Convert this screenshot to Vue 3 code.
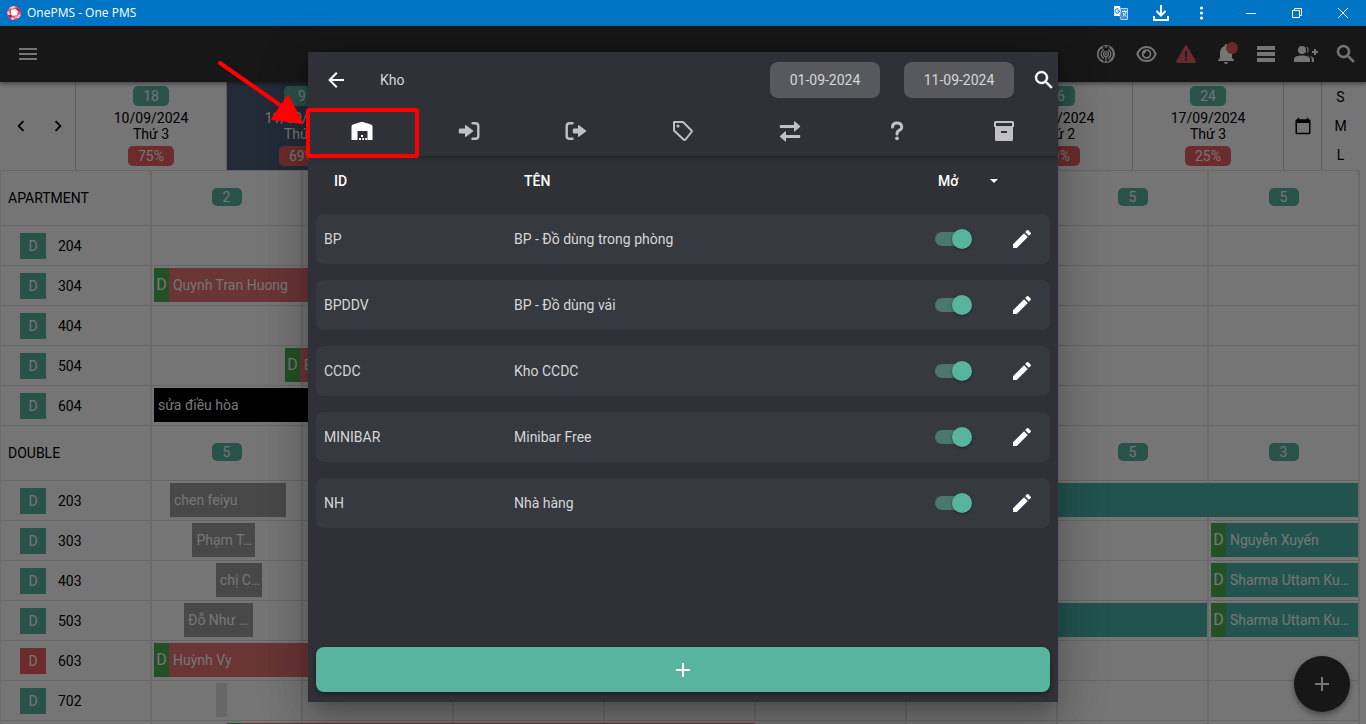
<script setup>
import { ref } from 'vue'

const days = [
  { date: '10/09/2024', name: 'Thứ 3', free: 18, load: '75%' },
  { date: '11/09/2024', name: 'Thứ 4', free: 9, load: '69%', today: true },
  { date: '12/09/2024', name: 'Thứ 5' },
  { date: '13/09/2024', name: 'Thứ 6' },
  { date: '14/09/2024', name: 'Thứ 7' },
  { date: '15/09/2024', name: 'CN' },
  { date: '16/09/2024', name: 'Thứ 2', free: 16, load: '39%' },
  { date: '17/09/2024', name: 'Thứ 3', free: 24, load: '25%' },
]

// start and end are counted in days from the first column
const groups = [
  {
    name: 'APARTMENT',
    free: [2, '', '', '', '', '', 5, 5],
    rooms: [
      { no: '204', bars: [] },
      { no: '304', bars: [{ start: 0.013, end: 2, kind: 'red', flag: true, text: 'Quynh Tran Huong' }] },
      { no: '404', bars: [] },
      { no: '504', bars: [{ start: 0.881, end: 2, kind: 'red', flag: true, text: 'E' }] },
      { no: '604', bars: [{ start: 0.013, end: 2, kind: 'black', text: 'sửa điều hòa' }] },
    ],
  },
  {
    name: 'DOUBLE',
    free: [5, '', '', '', '', '', 5, 3],
    rooms: [
      { no: '203', bars: [
        { start: 0.119, end: 0.887, kind: 'grey', text: 'chen feiyu' },
        { start: 5, end: 7.987, kind: 'teal', text: '' },
      ] },
      { no: '303', bars: [
        { start: 0.268, end: 0.684, kind: 'grey', text: 'Phạm T…' },
        { start: 7.013, end: 7.987, kind: 'teal', flag: true, text: 'Nguyễn Xuyến' },
      ] },
      { no: '403', bars: [
        { start: 0.423, end: 0.728, kind: 'grey', text: 'chị C…' },
        { start: 7.013, end: 7.987, kind: 'teal', flag: true, text: 'Sharma Uttam Ku…' },
      ] },
      { no: '503', bars: [
        { start: 0.212, end: 0.669, kind: 'grey', text: 'Đỗ Như …' },
        { start: 5, end: 6.987, kind: 'teal', text: '' },
        { start: 7.013, end: 7.987, kind: 'teal', flag: true, text: 'Sharma Uttam Ku…' },
      ] },
      { no: '603', dirty: true, bars: [{ start: 0.013, end: 2, kind: 'red', flag: true, text: 'Huỳnh Vy' }] },
      { no: '702', bars: [{ start: 0.424, end: 0.497, kind: 'pale', text: '' }] },
      { no: '703', bars: [{ start: 0.497, end: 3.987, kind: 'red', flag: true, text: '' }] },
    ],
  },
]

const place = (b) => ({
  left: (b.start / 8) * 100 + '%',
  width: ((b.end - b.start) / 8) * 100 + '%',
})

const tabs = ['Kho', 'Nhập', 'Xuất', 'Nhãn', 'Chuyển', 'Kiểm', 'Lưu trữ']
const activeTab = ref(0)

const stores = ref([
  { id: 'BP', name: 'BP - Đồ dùng trong phòng', open: true },
  { id: 'BPDDV', name: 'BP - Đồ dùng vải', open: true },
  { id: 'CCDC', name: 'Kho CCDC', open: true },
  { id: 'MINIBAR', name: 'Minibar Free', open: true },
  { id: 'NH', name: 'Nhà hàng', open: true },
])
const from = ref('01-09-2024')
const to = ref('11-09-2024')
const magnify = 'M9.5,3A6.5,6.5 0 0,1 16,9.5C16,11.11 15.41,12.59 14.44,13.73L14.71,14H15.5L20.5,19L19,20.5L14,15.5V14.71L13.73,14.44C12.59,15.41 11.11,16 9.5,16A6.5,6.5 0 0,1 3,9.5A6.5,6.5 0 0,1 9.5,3M9.5,5C7,5 5,7 5,9.5C5,12 7,14 9.5,14C12,14 14,12 14,9.5C14,7 12,5 9.5,5Z'
</script>

<template>
  <div class="window">
    <header class="titlebar">
      <svg class="logo" viewBox="0 0 14 14" width="14" height="14">
        <circle cx="7" cy="7" r="7" fill="#e5536b" />
        <path d="M2 2L6 0L9 1L5 3ZM0 6L2 5L3 9L1 9ZM11 9L14 8L12 12L10 12ZM4 11L8 12L6 14L4 13Z" fill="#f9c9d1" />
        <path d="M4 4L8 3L11 5L10 9L6 10L4 8Z" fill="#fff" />
        <path d="M9 2L12 3L13 6L11 5ZM1 9L4 9L5 12L2 11Z" fill="#c8102e" />
        <path d="M8 10L10 9L10 12L8 12Z" fill="#f3a0ae" />
      </svg>
      <span class="apptitle">OnePMS - One PMS</span>
      <button class="tb" aria-label="Dịch">
        <svg viewBox="0 0 16 16" width="16" height="16">
          <path d="M1.5 1H7L9 11H1.500Q1 11 1 10.500V1.500Q1 1 1.500 1Z" fill="#fff" />
          <path d="M6.500 5.800H4.300M6.500 5.800A2.200 2.200 0 1 1 5.700 4.200" stroke="#0075c5" fill="none" />
          <path d="M8 3.500H14.500V14.500H8L7 11.500" fill="#3b91d2" stroke="#b5d6ef" />
          <path d="M9 6.500H14M11.500 5.500V6.500M13 6.500Q12 10 9.500 11.500M10.200 8Q11 10 13.500 11.500" stroke="#e5f2fb" fill="none" />
        </svg>
      </button>
      <button class="tb" aria-label="Tải xuống">
        <svg viewBox="0 0 16 16" width="16" height="16" fill="none" stroke="#fff" stroke-width="2">
          <path d="M8 0V10M3.500 6L8 10.500L12.500 6M1 11V15H15V11" />
        </svg>
      </button>
      <button class="tb" aria-label="Tùy chọn">
        <svg viewBox="0 0 16 16" width="16" height="16" fill="#fff">
          <circle cx="8.500" cy="3" r="1.600" /><circle cx="8.500" cy="8" r="1.600" /><circle cx="8.500" cy="13" r="1.600" />
        </svg>
      </button>
      <button class="tb win first" aria-label="Thu nhỏ">
        <svg viewBox="0 0 10 10" width="10" height="10" stroke="#fff"><path d="M0 5.500H10" /></svg>
      </button>
      <button class="tb win" aria-label="Khôi phục">
        <svg viewBox="0 0 10 10" width="10" height="10" stroke="#fff" fill="none"><path d="M.5 2.500H7.500V9.500H.5ZM2.500 2.500V.5H9.500V7.500H7.500" /></svg>
      </button>
      <button class="tb win" aria-label="Đóng">
        <svg viewBox="0 0 10 10" width="10" height="10" stroke="#fff"><path d="M0 0L10 10M10 0L0 10" /></svg>
      </button>
    </header>

    <main class="app">
      <nav class="appbar">
        <button class="ab menu" aria-label="Menu">
          <svg viewBox="0 0 24 24" width="24" height="24"><path d="M3 6H21V8H3ZM3 11H21V13H3ZM3 16H21V18H3Z" /></svg>
        </button>
        <button class="ab" aria-label="Phát sóng">
          <svg class="line" viewBox="0 0 24 24" width="24" height="24">
            <circle cx="12" cy="12" r="8.500" stroke-width="1.200" />
            <path d="M9 19A7 7 0 0 1 9 5.500M15 5.500A7 7 0 0 1 15 18.500M10 16.500A5 5 0 0 1 10 7.500M14 7.500A5 5 0 0 1 14 16.500M12 15V21M12 3V6" stroke-width="1.300" />
            <circle cx="12" cy="12" r="2.500" stroke-width="1.200" /><circle cx="12" cy="12" r="1" />
          </svg>
        </button>
        <button class="ab" aria-label="Xem">
          <svg viewBox="0 0 24 24" width="24" height="24">
            <path d="M12.500 4C7.500 4 4 7 2.300 12C4 17 7.500 20 12.500 20S21 17 22.700 12C21 7 17.500 4 12.500 4ZM12.500 18C8.500 18 6 16 4.500 12C6 8 8.500 6 12.500 6S19 8 20.500 12C19 16 16.500 18 12.500 18Z" />
            <path d="M12.500 7.200A4.800 4.800 0 1 0 17.300 12A4.800 4.800 0 0 0 12.500 7.200ZM12.500 15A3 3 0 0 1 9.600 11.500A2 2 0 0 0 12 9.100A3 3 0 1 1 12.500 15Z" />
          </svg>
        </button>
        <button class="ab" aria-label="Cảnh báo">
          <svg class="warn" viewBox="0 0 24 24" width="24" height="24"><path d="M12 3.500Q12.700 3.500 13.200 4.300L21.800 19Q22.500 21 20.700 21H3.300Q1.500 21 2.200 19L10.800 4.300Q11.300 3.500 12 3.500ZM11 9V15H13V9ZM11 16.500V18.500H13V16.500Z" /></svg>
        </button>
        <button class="ab" aria-label="Thông báo">
          <svg viewBox="0 0 24 24" width="24" height="24">
            <path d="M20 18V19H4V18L6 16V10.500C6 7.500 7.700 4.900 10.500 4.200V3.500A1.500 1.500 0 0 1 13.500 3.500V4.200C16.300 4.900 18 7.500 18 10.500V16ZM14 20A2 2 0 0 1 10 20" />
          </svg>
          <i class="dot"></i>
        </button>
        <button class="ab" aria-label="Danh sách">
          <svg viewBox="0 0 24 24" width="24" height="24"><path d="M3 4H21V8H3ZM3 10H21V14H3ZM3 16H21V20H3Z" /></svg>
        </button>
        <button class="ab" aria-label="Thêm khách">
          <svg viewBox="0 0 24 24" width="24" height="24">
            <path d="M0 20V17C0 14.500 4 13.500 8 13.500S16 14.500 16 17V20ZM8 4A4 4 0 1 1 8 12A4 4 0 1 1 8 4ZM12 4.200A4 4 0 0 1 12 11.800Q13.500 10 13.500 8T12 4.200ZM15 13.700Q20 14.800 20 17.500V20H17.800V17Q17.800 15 15 13.700ZM20 7H22V9H24V11H22V13H20V11H18V9H20Z" />
          </svg>
        </button>
        <button class="ab" aria-label="Tìm kiếm">
          <svg viewBox="0 0 24 24" width="24" height="24"><path :d="magnify" stroke="currentColor" stroke-width=".6" /></svg>
        </button>
      </nav>

      <section class="days">
        <div class="pager">
          <button aria-label="Trước"><svg viewBox="0 0 24 24" width="22" height="22"><path d="M15.410 16.580L10.830 12L15.410 7.410L14 6L8 12L14 18Z" /></svg></button>
          <button aria-label="Sau"><svg viewBox="0 0 24 24" width="22" height="22"><path d="M8.590 16.580L13.170 12L8.590 7.410L10 6L16 12L10 18Z" /></svg></button>
        </div>
        <div v-for="d in days" :key="d.date" class="day" :class="{ today: d.today }">
          <span class="chip">{{ d.free }}</span>
          <span class="date">{{ d.date }}<br />{{ d.name }}</span>
          <span class="chip load">{{ d.load }}</span>
        </div>
        <button class="cal" aria-label="Lịch">
          <svg viewBox="0 0 24 24" width="18" height="18"><path d="M20 3H19V1H17V3H7V1H5V3H4Q2 3 2 5V21Q2 23 4 23H20Q22 23 22 21V5Q22 3 20 3ZM20 21H4V8H20Z" /></svg>
        </button>
        <div class="sizes"><button>S</button><button>M</button><button>L</button></div>
      </section>

      <section class="board">
        <template v-for="g in groups" :key="g.name">
          <div class="row group">
            <div class="cell">{{ g.name }}</div>
            <div v-for="(n, i) in g.free" :key="i" class="cell mid"><span v-if="n" class="chip small">{{ n }}</span></div>
          </div>
          <div v-for="r in g.rooms" :key="r.no" class="row room">
            <div class="cell name"><span class="state" :class="{ dirty: r.dirty }">D</span>{{ r.no }}</div>
            <div v-for="i in 8" :key="i" class="cell"></div>
            <div class="track">
              <div v-for="b in r.bars" :key="b.start" class="bar" :class="b.kind" :style="place(b)">
                <span v-if="b.flag" class="flag">D</span>
                <span class="guest">{{ b.text }}</span>
              </div>
            </div>
          </div>
        </template>
      </section>

      <button class="fab" aria-label="Tạo mới">
        <svg viewBox="0 0 24 24" width="24" height="24"><path d="M19 13H13V19H11V13H5V11H11V5H13V11H19Z" /></svg>
      </button>

      <div class="shade">
        <div class="dialog" role="dialog" aria-label="Kho">
          <div class="head">
            <div class="bar-top">
              <button class="back" aria-label="Quay lại">
                <svg viewBox="0 0 24 24" width="24" height="24"><path d="M20 11V13H8L13.500 18.500L12.080 19.920L4.160 12L12.080 4.080L13.500 5.500L8 11Z" /></svg>
              </button>
              <span class="title">Kho</span>
              <input v-model="from" class="when" aria-label="Từ ngày" />
              <input v-model="to" class="when" aria-label="Đến ngày" />
              <button class="find" aria-label="Tìm">
                <svg viewBox="0 0 24 24" width="24" height="24"><path :d="magnify" stroke="currentColor" stroke-width=".4" /></svg>
              </button>
            </div>
            <div class="tabs" role="tablist">
              <button v-for="(t, i) in tabs" :key="t" role="tab" :aria-label="t" :aria-selected="activeTab === i" :class="{ on: activeTab === i }" @click="activeTab = i">
                <svg v-if="i === 0" viewBox="0 0 24 24" width="24" height="24"><path d="M1.500 21V7.500Q1.500 6 3 5.400L11 3.100Q12 2.800 13 3.100L21 5.400Q22.500 6 22.500 7.500V21H17.500V12H7.500V21ZM11 16H13V18H11ZM9 19H11V21H9ZM12.200 19H14V21H12.200ZM15.200 19H17V21H15.200Z" /></svg>
                <svg v-else-if="i === 1" viewBox="0 0 24 24" width="24" height="24"><path d="M3 9.500H8V6.800Q8 5.600 9 6.300L16 11.400Q16.600 12 16 12.600L9 17.700Q8 18.400 8 17.200V14.500H3Q1.800 14.500 1.800 13.300V10.700Q1.800 9.500 3 9.500Z" /><path class="stroke" d="M15.500 4.300H18.500Q21.300 4.300 21.300 7V17Q21.300 19.700 18.500 19.700H15.500" /></svg>
                <svg v-else-if="i === 2" viewBox="0 0 24 24" width="24" height="24"><path d="M10 9.500H14V6.800Q14 5.600 15 6.300L22 11.400Q22.600 12 22 12.600L15 17.700Q14 18.400 14 17.200V14.500H10Q8.800 14.500 8.800 13.300V10.700Q8.800 9.500 10 9.500Z" /><path class="stroke" d="M8.500 4.300H5.500Q2.700 4.300 2.700 7V17Q2.700 19.700 5.500 19.700H8.500" /></svg>
                <svg v-else-if="i === 3" viewBox="0 0 24 24" width="24" height="24"><path class="stroke thin" d="M3 3H11.500Q12 3 12.500 3.500L20.500 11.500Q21.300 12.300 20.500 13L14.500 20.500Q13.500 21.300 12.500 20.500L3.500 12Q3 11.500 3 11Z" /><circle cx="7" cy="7" r="1.600" /></svg>
                <svg v-else-if="i === 4" viewBox="0 0 24 24" width="24" height="24"><path d="M2.600 6H16V3Q16 1.700 17 2.600L22 7Q22.500 7.500 22 8L17 12.300Q16 13.200 16 12V9H2.600Q1.800 9 1.800 8.200V6.800Q1.800 6 2.600 6ZM21.500 16H8V13Q8 11.700 7 12.600L2 17Q1.500 17.500 2 18L7 22.300Q8 23.200 8 22V19H21.500Q22.200 19 22.200 18.200V16.800Q22.200 16 21.500 16Z" /></svg>
                <svg v-else-if="i === 5" viewBox="0 0 24 24" width="24" height="24"><path class="stroke big" d="M7.500 8Q7.500 4 12 4T16.800 8Q16.800 10 14.500 11.200Q12 12.500 12 15" /><circle cx="12" cy="19.300" r="1.900" /></svg>
                <svg v-else viewBox="0 0 24 24" width="24" height="24"><path d="M3.500 2H20.500Q22 2 22 3.500V8H21V20.500Q21 22 19.500 22H4.500Q3 22 3 20.500V8H2V3.500Q2 2 3.500 2ZM4 4V7H20V4ZM9 12V14H15V12Z" /></svg>
              </button>
            </div>
          </div>

          <table class="stores">
            <thead>
              <tr>
                <th scope="col">ID</th>
                <th scope="col">TÊN</th>
                <th scope="col" class="filter">
                  <select aria-label="Trạng thái"><option>Mở</option></select>
                  <svg viewBox="0 0 24 24" width="24" height="24"><path d="M8 10L12 14L16 10Z" /></svg>
                </th>
              </tr>
            </thead>
            <tbody>
              <tr v-for="s in stores" :key="s.id">
                <td>{{ s.id }}</td>
                <td>{{ s.name }}</td>
                <td><input v-model="s.open" type="checkbox" class="switch" :aria-label="'Mở ' + s.name" /></td>
                <td>
                  <button class="edit" :aria-label="'Sửa ' + s.name">
                    <svg viewBox="0 0 24 24" width="24" height="24"><path d="M20.710 7.040C21.100 6.650 21.100 6 20.710 5.630L18.370 3.290C18 2.900 17.350 2.900 16.960 3.290L15.120 5.120L18.870 8.870M3 17.250V21H6.750L17.810 9.930L14.060 6.180L3 17.250Z" /></svg>
                  </button>
                </td>
              </tr>
            </tbody>
          </table>

          <button class="add" aria-label="Thêm kho">
            <svg viewBox="0 0 24 24" width="24" height="24"><path d="M19 13H13V19H11V13H5V11H11V5H13V11H19Z" /></svg>
          </button>

          <div class="frame"></div>
          <svg class="pointer" viewBox="0 0 90 66" width="90" height="66">
            <path d="M4 4L64 46" stroke="#f00" stroke-width="4" stroke-linecap="round" />
            <path d="M72 37L86 64L56 60Z" fill="#f00" stroke="#f00" stroke-width="2" stroke-linejoin="round" />
          </svg>
        </div>
      </div>
    </main>
  </div>
</template>

<style>
body {
  overflow: hidden;
}
</style>

<style scoped>
* {
  box-sizing: border-box;
}
.window {
  display: flex;
  flex-direction: column;
  height: 100vh;
  overflow: hidden;
  font: 14px/16px Roboto, sans-serif;
  color: #000;
}
button {
  display: flex;
  align-items: center;
  justify-content: center;
  padding: 0;
  border: 0;
  background: none;
  color: inherit;
  font: inherit;
}
svg {
  display: block;
  flex: none;
  fill: currentColor;
}
.titlebar {
  display: flex;
  flex: none;
  align-items: center;
  height: 26px;
  background: #0075c5;
  color: #fff;
}
.logo {
  margin: 0 6px 0 7px;
}
.apptitle {
  flex: 1;
  font: 12px/16px "Open Sans", sans-serif;
}
.tb {
  width: 40px;
  height: 26px;
}
.tb svg {
  fill: none;
}
.tb svg[fill="#fff"] {
  fill: #fff;
}
.tb.win {
  width: 46px;
}
.tb.first {
  margin-left: 7px;
}
.app {
  position: relative;
  display: flex;
  flex: 1;
  flex-direction: column;
  min-height: 0;
  background: #fff;
}
.appbar {
  position: relative;
  z-index: 1;
  display: flex;
  flex: none;
  align-items: center;
  height: 56px;
  background: #323236;
  color: #fff;
  box-shadow: 0 2px 4px rgba(0, 0, 0, 0.4);
}
.ab {
  position: relative;
  width: 40px;
  height: 40px;
}
.menu {
  margin: 0 auto 0 8px;
}
.line {
  fill: none;
  stroke: currentColor;
}
.warn {
  color: #e25c5c;
}
.dot {
  position: absolute;
  top: 8px;
  right: 8px;
  width: 12px;
  height: 12px;
  border-radius: 50%;
  background: #e25c5c;
}
.days {
  display: grid;
  flex: none;
  grid-template-columns: 75px repeat(8, 1fr) 38px 38px;
  height: 88px;
  margin-right: 7px;
}
.days > * + * {
  border-left: 1px solid #cfcfcf;
}
.pager {
  display: flex;
  align-items: center;
  justify-content: space-between;
  padding: 0 6px 0 10px;
}
.day {
  display: flex;
  flex-direction: column;
  align-items: center;
  justify-content: space-between;
  padding: 4px 0 4px;
  text-align: center;
}
.today {
  background: #4c5f7a;
  color: #fff;
}
.chip {
  min-width: 36px;
  padding: 2px 10px;
  border-radius: 5px;
  background: #59b49f;
  color: #fff;
  text-align: center;
}
.load {
  background: #eb6161;
}
.small {
  min-width: 30px;
  padding: 1px 10px;
}
.sizes {
  display: flex;
  flex-direction: column;
  justify-content: space-around;
}
.sizes,
.day:last-of-type {
  border-right: 0;
}
.board {
  flex: 1;
  min-height: 0;
  margin-right: 6px;
  overflow: hidden;
  border-left: 1px solid #ececec;
}
.row {
  position: relative;
  display: grid;
  grid-template-columns: repeat(9, 1fr);
  height: 40px;
}
.group {
  height: 55px;
}
.cell {
  display: flex;
  align-items: center;
  padding-left: 7px;
  border-top: 1px solid #dedede;
  border-right: 2px solid #e8e8e8;
}
.mid {
  justify-content: center;
  padding: 0 0 2px;
}
.name {
  gap: 12px;
  padding-left: 19px;
}
.state {
  width: 26px;
  background: #59b49f;
  color: #fff;
  line-height: 26px;
  text-align: center;
}
.dirty {
  background: #eb6161;
}
.track {
  position: absolute;
  inset: 3px 0 3px 11.1111%;
}
.bar {
  position: absolute;
  top: 0;
  bottom: 0;
  display: flex;
  align-items: center;
  color: #fff;
  line-height: 34px;
}
.flag {
  flex: none;
  width: 15px;
  background: #4caf50;
  font-size: 16px;
  text-align: center;
}
.guest {
  padding-left: 4px;
  white-space: nowrap;
}
.red {
  background: #e57373;
}
.black {
  background: #000;
}
.grey {
  background: #9e9e9e;
}
.teal {
  background: #4db6ac;
}
.pale {
  background: #e0e0e0;
}
.fab {
  position: absolute;
  right: 16px;
  bottom: 12px;
  width: 56px;
  height: 56px;
  border-radius: 50%;
  background: #323236;
  color: #fff;
  box-shadow: 0 3px 6px rgba(0, 0, 0, 0.4);
}
.shade {
  position: absolute;
  inset: 0;
  z-index: 2;
  display: flex;
  justify-content: center;
  padding: 26px 16px 22px;
  background: rgba(0, 0, 0, 0.54);
}
.dialog {
  position: relative;
  display: flex;
  flex: 0 1 750px;
  flex-direction: column;
  background: #303136;
  color: #d6d6d7;
  box-shadow: 0 11px 15px -7px rgba(0, 0, 0, 0.2), 0 24px 38px 3px rgba(0, 0, 0, 0.14), 0 9px 46px 8px rgba(0, 0, 0, 0.12);
}
.head {
  box-shadow: 0 2px 4px rgba(0, 0, 0, 0.3);
}
.bar-top {
  display: flex;
  align-items: center;
  height: 56px;
}
.back {
  width: 56px;
  height: 56px;
  color: #fff;
}
.title {
  flex: 1;
  padding-left: 16px;
}
.when {
  width: 110px;
  height: 36px;
  margin-right: 24px;
  padding: 0;
  border: 0;
  border-radius: 8px;
  background: #58595d;
  color: #d6d6d7;
  font: inherit;
  text-align: center;
}
.find {
  width: 32px;
  height: 36px;
  margin-left: -12px;
  padding-left: 4px;
  color: #fff;
}
.tabs {
  display: grid;
  grid-template-columns: repeat(7, 1fr);
  height: 48px;
  color: #c1c1c3;
}
.tabs button {
  padding-bottom: 2px;
}
.tabs .on {
  color: #fff;
}
.stroke {
  fill: none;
  stroke: currentColor;
  stroke-width: 2.400;
  stroke-linejoin: round;
  stroke-linecap: round;
}
.thin {
  stroke-width: 2;
}
.big {
  stroke-width: 3;
}
.stores {
  display: block;
  flex: 1;
  padding: 0 8px;
}
.stores thead {
  display: block;
}
.stores tbody {
  display: flex;
  flex-direction: column;
  gap: 16px;
  padding-top: 8px;
}
.stores tr {
  display: grid;
  grid-template-columns: 190px 1fr 78px 58px;
  align-items: center;
  height: 50px;
}
.stores tbody tr {
  border-radius: 8px;
  background: #363940;
}
.stores td {
  padding: 0 0 0 8px;
}
.stores th {
  padding: 0 0 0 18px;
  color: #fff;
  font-weight: 500;
  text-align: left;
}
.stores .filter {
  display: flex;
  grid-column: 3 / 5;
  align-items: center;
  padding-left: 24px;
}
.filter select {
  width: 44px;
  padding: 0;
  border: 0;
  appearance: none;
  background: none;
  color: inherit;
  font: inherit;
}
.switch {
  position: relative;
  display: block;
  width: 37px;
  height: 20px;
  margin: 0 0 0 13px;
  appearance: none;
}
.switch::before {
  position: absolute;
  inset: 3px 2px 3px 0;
  border-radius: 7px;
  background: #4a776e;
  content: "";
}
.switch::after {
  position: absolute;
  top: 0;
  right: 0;
  width: 20px;
  height: 20px;
  border-radius: 50%;
  background: #59b49f;
  box-shadow: 0 1px 3px rgba(0, 0, 0, 0.4);
  content: "";
}
.switch:not(:checked)::after {
  right: 17px;
}
.edit {
  width: 44px;
  height: 36px;
  color: #fff;
}
.add {
  height: 45px;
  margin: 0 8px 10px;
  border-radius: 8px;
  background: #59b49f;
  color: #fff;
  box-shadow: 0 2px 5px rgba(0, 0, 0, 0.4);
}
.frame {
  position: absolute;
  top: 56px;
  left: -2px;
  width: 113px;
  height: 50px;
  border: 4px solid #f00;
  border-radius: 3px;
}
.pointer {
  position: absolute;
  top: 7px;
  left: -92px;
}
</style>
